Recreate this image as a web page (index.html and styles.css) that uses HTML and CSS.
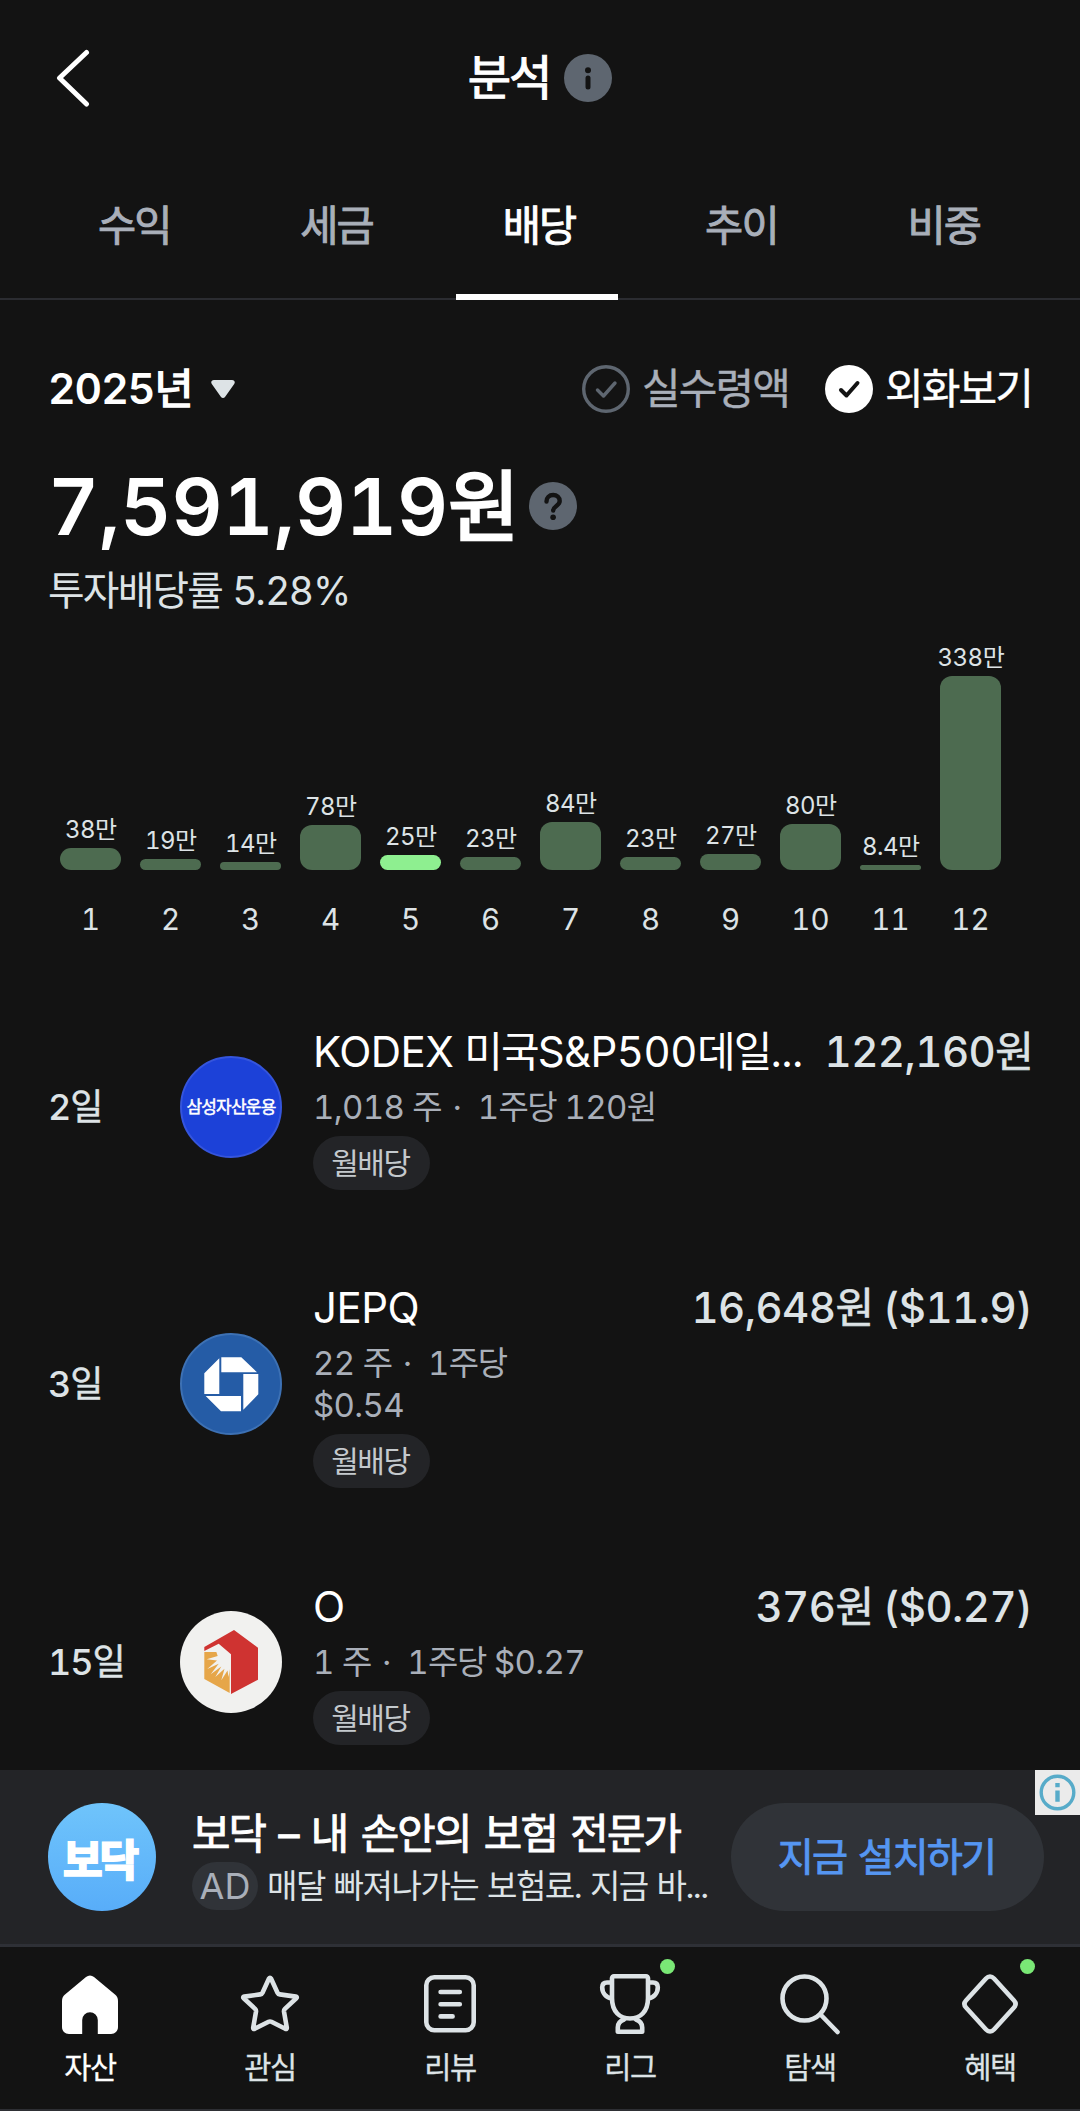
FILE: index.html
```
<!DOCTYPE html>
<html lang="ko">
<head>
<meta charset="utf-8">
<title>분석</title>
<link rel="stylesheet" href="styles.css">
</head>
<body>
<div class="app">
  <header class="header">
    <svg class="back" viewBox="0 0 42 64"><path d="M38.500 6.500 11.500 32l27 26" fill="none" stroke="#fff" stroke-width="5" stroke-linecap="round" stroke-linejoin="round"/></svg>
    <h1 class="page-title"><span class="ko md">분석</span></h1>
    <svg class="badge" viewBox="0 0 48 48"><circle cx="24" cy="24" r="24" fill="#5e6670"/><circle cx="24" cy="16.2" r="3" fill="#131313"/><path d="M24 24v9" stroke="#131313" stroke-width="5" stroke-linecap="round"/></svg>
    <span class="spacer"></span>
  </header>

  <nav class="tabs">
    <a class="tab"><span class="ko md">수익</span></a>
    <a class="tab"><span class="ko md">세금</span></a>
    <a class="tab active"><span class="ko md">배당</span></a>
    <a class="tab"><span class="ko md">추이</span></a>
    <a class="tab"><span class="ko md">비중</span></a>
  </nav>

  <main class="content">
    <div class="filters">
      <div class="year">2025<span class="ko md">년</span></div>
      <svg class="caret" viewBox="0 0 24 20"><path d="M3 1h18c2.500 0 3.500 2.200 2.200 4L14 18c-1 1.400-3 1.400-4 0L.8 5C-.5 3.200.5 1 3 1Z" fill="#dde3e6"/></svg>
      <div class="option muted">
        <svg class="check" viewBox="0 0 48 48"><circle cx="24" cy="24" r="22.300" fill="none" stroke="#5e6670" stroke-width="3.400"/><path d="m15.500 25 6 6 11.500-13" fill="none" stroke="#5e6670" stroke-width="3.400" stroke-linecap="round" stroke-linejoin="round"/></svg>
        <span class="ko">실수령액</span>
      </div>
      <div class="option">
        <svg class="check" viewBox="0 0 48 48"><circle cx="24" cy="24" r="24" fill="#fff"/><path d="m16 25 5.500 5.500L32.500 18" fill="none" stroke="#131313" stroke-width="4" stroke-linecap="round" stroke-linejoin="round"/></svg>
        <span class="ko">외화보기</span>
      </div>
    </div>

    <div class="total">
      <div class="amount">7,591,919<span class="ko">원</span></div>
      <svg class="badge" viewBox="0 0 48 48"><circle cx="24" cy="24" r="24" fill="#5e6670"/><path d="M17.500 19.500c0-4 2.800-6.500 6.600-6.500s6.600 2.400 6.600 6c0 4.800-6.500 5-6.500 9.500" fill="none" stroke="#131313" stroke-width="4.400" stroke-linecap="round"/><circle cx="24.100" cy="35.300" r="2.800" fill="#131313"/></svg>
    </div>
    <div class="yield"><span class="ko">투자배당률</span> 5.28%</div>

    <section class="chart">
      <div class="col"><span class="val">38<span class="ko">만</span></span><i class="bar" style="height:22px"></i></div>
      <div class="col"><span class="val">19<span class="ko">만</span></span><i class="bar" style="height:11px"></i></div>
      <div class="col"><span class="val">14<span class="ko">만</span></span><i class="bar" style="height:8px"></i></div>
      <div class="col"><span class="val">78<span class="ko">만</span></span><i class="bar" style="height:45px"></i></div>
      <div class="col"><span class="val">25<span class="ko">만</span></span><i class="bar current" style="height:15px"></i></div>
      <div class="col"><span class="val">23<span class="ko">만</span></span><i class="bar" style="height:13px"></i></div>
      <div class="col"><span class="val">84<span class="ko">만</span></span><i class="bar" style="height:48px"></i></div>
      <div class="col"><span class="val">23<span class="ko">만</span></span><i class="bar" style="height:13px"></i></div>
      <div class="col"><span class="val">27<span class="ko">만</span></span><i class="bar" style="height:16px"></i></div>
      <div class="col"><span class="val">80<span class="ko">만</span></span><i class="bar" style="height:46px"></i></div>
      <div class="col"><span class="val">8.4<span class="ko">만</span></span><i class="bar" style="height:5px"></i></div>
      <div class="col"><span class="val">338<span class="ko">만</span></span><i class="bar" style="height:194px"></i></div>
    </section>
    <div class="months">
      <span>1</span><span>2</span><span>3</span><span>4</span><span>5</span><span>6</span><span>7</span><span>8</span><span>9</span><span>10</span><span>11</span><span>12</span>
    </div>

    <section class="payouts">
      <article class="payout">
        <div class="day">2<span class="ko">일</span></div>
        <div class="logo samsung"><span class="ko">삼성자산운용</span></div>
        <div class="info">
          <div class="line"><span class="name">KODEX <span class="ko">미국</span>S&amp;P500<span class="ko">데일</span>...</span><span class="price">122,160<span class="ko">원</span></span></div>
          <div class="sub">1,018 <span class="ko">주</span> <span class="sep">·</span> &nbsp;1<span class="ko">주당</span> 120<span class="ko">원</span></div>
          <span class="tag"><span class="ko">월배당</span></span>
        </div>
      </article>
      <article class="payout">
        <div class="day">3<span class="ko">일</span></div>
        <svg class="logo" viewBox="0 0 102 102"><circle cx="51" cy="51" r="50" fill="#255ca6" stroke="#3d71b4" stroke-width="2"/><path d="M41.300 24.300h20L77 39.300H41.300ZM63.300 41h15v20.300l-15 15.400ZM25.700 63H61v15.300H41ZM39.300 25.300V61h-15V40.300Z" fill="#fff"/></svg>
        <div class="info">
          <div class="line"><span class="name">JEPQ</span><span class="price">16,648<span class="ko">원</span> ($11.9)</span></div>
          <div class="sub">22 <span class="ko">주</span> <span class="sep">·</span> &nbsp;1<span class="ko">주당</span><br>$0.54</div>
          <span class="tag"><span class="ko">월배당</span></span>
        </div>
      </article>
      <article class="payout">
        <div class="day">15<span class="ko">일</span></div>
        <svg class="logo" viewBox="0 0 102 102"><circle cx="51" cy="51" r="51" fill="#f1f1ef"/><path d="M54 19 78 36.700v32L51 83V43.300L38.700 32.700 24.300 40v-4Z" fill="#cf3331"/><path d="M24.300 41H37l12.700 15v26L24.300 68Z" fill="#e6a649"/><path d="m36 40 14 3v15l-1.500 8-1-6.500-6.200 9.800 3.200-11.500-9.200 8.200 6-10.600L30.700 63.300l8-10.600L27.300 58l9.700-8.500-10.300-1.200 11-3.200Z" fill="#f1f1ef"/></svg>
        <div class="info">
          <div class="line"><span class="name">O</span><span class="price">376<span class="ko">원</span> ($0.27)</span></div>
          <div class="sub">1 <span class="ko">주</span> <span class="sep">·</span> &nbsp;1<span class="ko">주당</span> $0.27</div>
          <span class="tag"><span class="ko">월배당</span></span>
        </div>
      </article>
    </section>
  </main>

  <aside class="ad">
    <div class="ad-logo"><span>보닥</span></div>
    <div class="ad-text">
      <div class="ad-title"><span class="ko md">보닥 – 내 손안의 보험 전문가</span></div>
      <div class="ad-desc"><span class="ad-mark">AD</span><span class="ko">매달 빠져나가는 보험료. 지금 바...</span></div>
    </div>
    <a class="install"><span class="ko md">지금 설치하기</span></a>
    <svg class="ad-info" viewBox="0 0 45 45"><path d="M0 0h45v45H0z" fill="#ebebeb"/><circle cx="22.500" cy="22.500" r="16.300" fill="none" stroke="#57abc9" stroke-width="3.400"/><path d="M20.300 13h4.400v4.200h-4.400zM20.300 20.500h4.400v11.300h-4.400z" fill="#57abc9"/></svg>
  </aside>

  <nav class="bottom">
    <a class="item on"><svg viewBox="0 0 64 64"><path d="M4 29c0-3 1-5 3-6.500L28 5c2.500-2 5.500-2 8 0l21 17.500c2 1.500 3 3.500 3 6.500v26c0 4-3 7-7 7H39.800V48a7.800 7.800 0 0 0-15.600 0v14H11c-4 0-7-3-7-7Z" fill="#fff"/></svg><span class="ko">자산</span></a>
    <a class="item"><svg class="stroke" viewBox="0 0 64 64"><path d="M31 6.500q1-1.500 2 0l6.500 14.200q.7 1.500 2.300 1.700l16 2.200q1.700.4.500 1.700L46.900 36.900q-1.100 1.100-.9 2.700l2.800 16.100q.2 1.900-1.500 1.100L33.400 49.800q-1.400-.7-2.800 0L16.700 56.800q-1.700.8-1.500-1.100L18 39.600q.2-1.600-.9-2.700L5.700 26.300q-1.200-1.300.5-1.700l16-2.200q1.600-.2 2.300-1.700Z"/></svg><span class="ko">관심</span></a>
    <a class="item"><svg class="stroke" viewBox="0 0 64 64"><rect x="8.300" y="5.300" width="47.400" height="53" rx="8"/><path d="M22.600 20h19.200M22.600 32.200h19.200M22.600 44.400h12"/></svg><span class="ko">리뷰</span></a>
    <a class="item"><svg class="stroke" viewBox="0 0 64 64"><path d="M16 4.300h32a2 2 0 0 1 2 2V26c0 14-8 20.500-18 20.500S14 40 14 26V6.300a2 2 0 0 1 2-2ZM14 10.500H9c-3 0-4.800 1.800-4.800 4.800C4.200 21 8 25.500 14 26.500M50 10.500h5c3 0 4.800 1.800 4.800 4.800C59.800 21 56 25.500 50 26.500M26 47.500c-4 1.500-6.200 4.500-6.200 8v4.300h24.400v-4.300c0-3.500-2.200-6.500-6.200-8"/></svg><span class="ko">리그</span><i class="dot"></i></a>
    <a class="item"><svg class="stroke" viewBox="0 0 64 64"><circle cx="26.500" cy="26.500" r="22"/><path d="m42.500 42.500 17 17.500"/></svg><span class="ko">탐색</span></a>
    <a class="item"><svg class="stroke" viewBox="0 0 64 64"><path d="M28 6.500c2.500-2.700 5.500-2.700 8 0l20 22c2 2.200 2 4.800 0 7l-20 22c-2.500 2.700-5.500 2.700-8 0l-20-22c-2-2.200-2-4.800 0-7Z"/></svg><span class="ko">혜택</span><i class="dot"></i></a>
  </nav>
</div>
</body>
</html>
```
FILE: styles.css
```
* { box-sizing: border-box; }

body {
  margin: 0;
  background: #131313;
  color: #fff;
  font-family: Inter, "Noto Sans CJK KR", sans-serif;
  font-variant-numeric: tabular-nums;
}

.app {
  width: 1080px;
  height: 2111px;
  display: flex;
  flex-direction: column;
  overflow: hidden;
}

svg { display: block; flex: none; }

/* Hangul runs are set tighter than the Latin text */
.ko {
  font-weight: 400;
  letter-spacing: -0.045em;
  line-height: 0;
  white-space: pre;
}
.ko.md { -webkit-text-stroke: 0.022em currentColor; }

/* Header */
.header {
  height: 156px;
  padding: 0 48px;
  display: flex;
  align-items: center;
  gap: 14px;
}
.back { width: 42px; height: 64px; margin-right: auto; }
.spacer { width: 42px; margin-left: auto; }
.page-title { margin: 0; font-size: 47.200px; line-height: 60px; }
.badge { width: 48px; height: 48px; }

/* Tabs */
.tabs {
  height: 144px;
  padding: 0 35px 0 33px;
  display: flex;
  border-bottom: 2px solid #2b2c31;
}
.tab {
  flex: 1;
  height: 144px;
  display: flex;
  align-items: center;
  justify-content: center;
  padding-bottom: 5px;
  color: #a9afb9;
  font-size: 41.500px;
  position: relative;
}
.tab.active { color: #fff; }
.tab.active::after {
  content: "";
  position: absolute;
  left: 18px;
  right: 22px;
  bottom: 0;
  height: 6px;
  background: #fff;
}

/* Content */
.content { padding: 65px 48px 25px; }

.filters { height: 48px; display: flex; align-items: center; }
.year { font-size: 42.600px; font-weight: 600; line-height: 48px; letter-spacing: -0.022em; }
.year .ko { -webkit-text-stroke-width: 0.035em; }
.caret { width: 24px; height: 20px; margin-left: 19px; margin-right: auto; }
.option { display: flex; align-items: center; gap: 12px; font-size: 42px; margin-left: 36px; }
.option .ko { -webkit-text-stroke: 0.010em currentColor; }
.option.muted { color: #a9afb9; }
.check { width: 48px; height: 48px; }

.total { height: 96px; margin-top: 45px; display: flex; align-items: center; gap: 13px; }
.amount { font-size: 79px; font-weight: 600; line-height: 96px; }
.amount .ko { font-size: 0.98em; -webkit-text-stroke: 0.035em currentColor; }
.yield {
  margin-top: 12px;
  font-size: 39px;
  line-height: 50px;
  letter-spacing: -0.01em;
  font-variant-numeric: normal;
  color: #dde3e6;
}
.yield .ko { font-size: 39.800px; }

/* Chart */
.chart {
  height: 254px;
  padding-left: 12px;
  display: grid;
  grid-template-columns: repeat(12, 61px);
  column-gap: 19px;
}
.col { display: flex; flex-direction: column; align-items: center; justify-content: flex-end; }
.val {
  font-size: 24px;
  line-height: 28px;
  letter-spacing: -0.02em;
  margin-bottom: 4px;
  white-space: nowrap;
  color: #dde3e6;
}
.bar { width: 61px; flex: none; border-radius: 12px; background: #4d6b50; }
.bar.current { background: #8eef90; }
.months {
  margin-top: 30px;
  padding-left: 12px;
  display: grid;
  grid-template-columns: repeat(12, 61px);
  column-gap: 19px;
  text-align: center;
  font-size: 29.500px;
  line-height: 38px;
  color: #dde3e6;
}

/* Payout list */
.payouts { margin-top: 86px; display: flex; flex-direction: column; gap: 90px; }
.payout { display: flex; align-items: center; }
.payout:last-child { margin-top: 1px; }
.day {
  width: 132px;
  font-size: 36px;
  font-weight: 500;
  line-height: 44px;
  letter-spacing: -0.03em;
  color: #dde3e6;
}
.day .ko { -webkit-text-stroke: 0.012em currentColor; }
.logo { width: 102px; height: 102px; flex: none; }
.samsung {
  display: flex;
  align-items: center;
  justify-content: center;
  border: 2px solid #3555dc;
  border-radius: 50%;
  background: #1c41d8;
  font-size: 17px;
}
.samsung .ko { -webkit-text-stroke: 0.500px currentColor; }
.info { flex: 1; margin-left: 31px; min-width: 0; }
.line {
  display: flex;
  justify-content: space-between;
  font-size: 42px;
  line-height: 55px;
  letter-spacing: -0.013em;
  white-space: nowrap;
}
.price { font-weight: 500; color: #dde3e6; }
.price .ko { -webkit-text-stroke: 0.015em currentColor; }
.sub {
  margin-top: 7px;
  font-size: 33px;
  line-height: 42px;
  letter-spacing: -0.02em;
  color: #a9afb9;
  white-space: nowrap;
}
.sep { margin-left: 3px; }
.tag {
  width: 117px;
  height: 54px;
  margin-top: 8px;
  padding-right: 2px;
  display: flex;
  align-items: center;
  justify-content: center;
  border-radius: 27px;
  background: #232427;
  color: #c4c9cd;
  font-size: 30px;
}

/* Advertisement */
.ad {
  height: 177px;
  padding: 0 36px 0 48px;
  display: flex;
  align-items: center;
  flex: none;
  position: relative;
  background: #232427;
  border-bottom: 3px solid #2e3036;
}
.ad-logo {
  width: 108px;
  height: 108px;
  flex: none;
  display: flex;
  align-items: center;
  justify-content: center;
  padding-right: 5px;
  border-radius: 50%;
  background: linear-gradient(#6fc4fb, #58adf9);
  font-size: 43px;
  font-weight: 700;
  letter-spacing: -3px;
}
.ad-logo span { -webkit-text-stroke: 2px #fff; }
.ad-text { width: 539px; margin: 4px 0 0 36px; flex: none; }
.ad-title { font-size: 41.800px; line-height: 52px; word-spacing: 4px; white-space: nowrap; }
.ad-desc {
  margin-top: 2px;
  display: flex;
  align-items: center;
  gap: 9px;
  font-size: 33.100px;
  line-height: 48px;
  word-spacing: 1.300px;
  color: #dde3e6;
}
.ad-mark {
  width: 66px;
  height: 48px;
  border-radius: 24px;
  background: #303338;
  color: #a9afb9;
  font-size: 36px;
  text-align: center;
}
.install {
  width: 313px;
  height: 108px;
  display: flex;
  align-items: center;
  justify-content: center;
  padding-right: 2px;
  border-radius: 54px;
  background: #303338;
  color: #5596f2;
  font-size: 39.200px;
  word-spacing: 3px;
}
.ad-info { position: absolute; top: 0; right: 0; width: 45px; height: 45px; }

/* Bottom navigation */
.bottom { height: 164px; flex: none; display: flex; border-bottom: 2px solid #2e2f34; }
.item {
  width: 180px;
  padding-top: 25px;
  display: flex;
  flex-direction: column;
  align-items: center;
  gap: 31px;
  position: relative;
  color: #dde3e6;
  font-size: 29.500px;
}
.item.on { color: #fff; }
.item .ko { -webkit-text-stroke: 0.010em currentColor; }
.item svg { width: 64px; height: 64px; }
.stroke { fill: none; stroke: #dde3e6; stroke-width: 4.600; stroke-linecap: round; stroke-linejoin: round; }
.dot {
  position: absolute;
  top: 12px;
  left: 120px;
  width: 15px;
  height: 15px;
  border-radius: 50%;
  background: #7ae876;
}
```
